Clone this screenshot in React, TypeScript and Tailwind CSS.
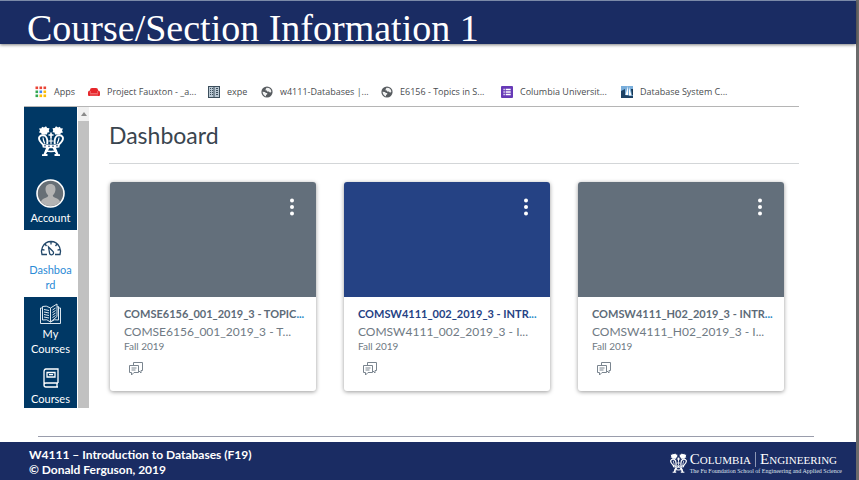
import React from "react";

function Crown({ className }: { className: string }) {
  return (
    <svg className={className} viewBox="0 0 26 30" fill="none" stroke="white" aria-hidden="true">
      <g fill="white" stroke="none">
        <path d="M4 .8L6 1.500 8 .3 9.200 2 11.500 2.300 10.800 4.500 11.500 6.300 9.500 6.500 9 8.500H3.500L3.300 7 1 6.500 2 4.500 1 2.500 3.500 2.300z" />
        <path d="M22 .8L20 1.500 18 .3 16.800 2 14.500 2.300 15.200 4.500 14.500 6.300 16.500 6.500 17 8.500H22.500L22.700 7 25 6.500 24 4.500 25 2.500 22.500 2.300z" />
        <path d="M12.200 6.500h1.600v1.800h1.700v1.500h-1.700V12h-1.600V9.800h-1.700V8.300h1.700z" />
        <path d="M4 17.800q9 2 18 0L21.300 21.500q-8.300 1.500-16.600 0z" />
        <path d="M8 22h3.500L8 28h1.500v2H4v-1.800h1.500zM18 22h-3.500L18 28h-1.500v2H22v-1.800h-1.500z" />
        <path d="M7 24q6 1.500 12 0v1.600q-6 1.500-12 0z" />
      </g>
      <path d="M5 18.500Q.2 14.500 1.200 11.200 2.800 8.500 6.500 9.500 10 11.500 9.200 18M21 18.500q4.800-4 3.800-7.300-1.600-2.700-5.300-1.700Q16 11.500 16.800 18" strokeWidth="1.900" />
      <path d="M5 11.500Q5.200 14.500 6.800 17.500M21 11.500Q20.800 14.500 19.200 17.500M13 12v6.500M10.500 15h5" strokeWidth="1.200" />
      <path d="M6 19.800h2M10 20.200h2M14 20.200h2M18 19.800h2" stroke="#17366b" strokeWidth=".9" />
    </svg>
  );
}

function AppsIcon() {
  const colors = ["#ea4335", "#ea4335", "#ea4335", "#34a853", "#4285f4", "#fbbc05", "#34a853", "#fbbc05", "#fbbc05"];
  return (
    <svg className="size-3 shrink-0" viewBox="0 0 12 12" aria-hidden="true">
      {colors.map((c, i) => (
        <rect key={i} x={0.5 + (i % 3) * 4} y={0.5 + Math.floor(i / 3) * 4} width="2.600" height="2.600" fill={c} />
      ))}
    </svg>
  );
}

function CouchIcon() {
  return (
    <svg className="size-3 shrink-0" viewBox="0 0 12 12" aria-hidden="true">
      <path d="M2 4q0-2 2-2h4q2 0 2 2v.6q2 0 2 1.800V9q0 1-1 1H1Q0 10 0 9V6.400q0-1.800 2-1.800z" fill="#e6262b" />
      <path d="M2.300 5v2.500h7.400V5M2 9h8" stroke="#f79a9c" strokeWidth=".6" fill="none" />
    </svg>
  );
}

function BuildingIcon() {
  return (
    <svg className="size-3 shrink-0" viewBox="0 0 12 12" aria-hidden="true">
      <rect x=".5" y=".5" width="11" height="11" fill="#b9c7d2" stroke="#3c4e5c" />
      <path d="M6 0v12" stroke="#3c4e5c" />
      <path d="M2 2.500h1M4 2.500h1M2 4.500h1M4 4.500h1M2 6.500h1M4 6.500h1M2 8.500h1M4 8.500h1M8 2.500h2M8 4.500h2M8 6.500h2M8 8.500h2" stroke="#3c4e5c" />
    </svg>
  );
}

function GlobeIcon() {
  return (
    <svg className="size-3 shrink-0" viewBox="0 0 12 12" aria-hidden="true">
      <circle cx="6" cy="6" r="5.600" fill="#585c60" />
      <path d="M1.500 5.800l2.300.2 1.200 1h1.200v1.300L5 9v1.400Q1.900 9.300 1.500 5.800zM5.500 1.700l2.500.3q2.200 1.200 2.400 3.600L9.200 6.800 7.800 5.600H6V4.400H4.600V3.200z" fill="#f1f2f2" />
    </svg>
  );
}

function ListIcon() {
  return (
    <svg className="size-3 shrink-0" viewBox="0 0 12 12" aria-hidden="true">
      <rect width="12" height="12" rx="1" fill="#673ab7" />
      <path d="M2.500 3.500h1.200M2.500 6h1.200M2.500 8.500h1.200M4.700 3.500h5M4.700 6h5M4.700 8.500h5" stroke="white" strokeWidth="1.300" />
    </svg>
  );
}

function SailIcon() {
  return (
    <svg className="size-3 shrink-0" viewBox="0 0 12 12" aria-hidden="true">
      <rect width="12" height="12" fill="#79aedb" />
      <path d="M0 5l4-2v6l8 1v2H0z" fill="#1e4265" />
      <path d="M7 0L4.500 9H7zM8 1v8.500h2.500z" fill="white" />
      <path d="M10 3h2v6l-1 .5z" fill="#163653" />
    </svg>
  );
}

const bookmarks = [
  { label: "Apps", icon: <AppsIcon />, width: "w-[53px]" },
  { label: "Project Fauxton - _a...", icon: <CouchIcon />, width: "w-[120px]" },
  { label: "expe", icon: <BuildingIcon />, width: "w-[53px]" },
  { label: "w4111-Databases |...", icon: <GlobeIcon />, width: "w-[120px]" },
  { label: "E6156 - Topics in S...", icon: <GlobeIcon />, width: "w-[120px]" },
  { label: "Columbia Universit...", icon: <ListIcon />, width: "w-[120px]" },
  { label: "Database System C...", icon: <SailIcon />, width: "w-[120px]" },
];

function Sidebar() {
  return (
    <nav aria-label="Global" className="flex w-[53px] shrink-0 flex-col bg-[#003865] text-center text-[11px] leading-[15px] text-white">
      <a href="#home" aria-label="Home" className="flex h-[70px] justify-center pt-[19px]">
        <Crown className="h-[30px] w-[26px]" />
      </a>
      <a href="#account" className="flex h-[53px] flex-col items-center gap-[2px]">
        <svg className="size-[31px] shrink-0" viewBox="0 0 31 31" aria-hidden="true">
          <circle cx="15.500" cy="16.500" r="13.500" fill="#676f76" stroke="white" strokeWidth="1.600" />
          <path d="M15.500 7c3.500 0 5 2.300 5 5.300 0 2.500-1.200 5-2.700 6 0 3 5.700 2.200 7.200 6.500a12.700 12.700 0 01-19 0c1.500-4.300 7.200-3.500 7.200-6.500-1.500-1-2.700-3.500-2.700-6 0-3 1.500-5.300 5-5.300z" fill="#b3b3b3" />
        </svg>
        <span>Account</span>
      </a>
      <a href="#dashboard" aria-current="page" className="flex h-[67px] flex-col items-center bg-white pt-2 text-[#2c8bd6]">
        <svg className="h-6 w-[22px] shrink-0" viewBox="0 0 22 24" fill="none" stroke="#23486a" strokeWidth="1.300" aria-hidden="true">
          <path d="M7 16.500H2Q.8 12.500 2.500 9 5.300 3.500 11 3.500t8.500 5.500Q21.200 12.500 20 16.500h-5M11 3.500v3M5 6l1.500 2M17 6l-1.500 2M2 11.500l2.500.6M20 11.500l-2.500.6" />
          <path d="M8.500 9l4.300 4.300a2 2 0 11-3.200 2z" />
        </svg>
        <span className="w-11 wrap-anywhere">Dashboard</span>
      </a>
      <a href="#my-courses" className="flex h-[63px] flex-col items-center pt-[5px]">
        <svg className="h-6 w-[21px] shrink-0" viewBox="0 0 21 24" fill="none" stroke="#dce6ee" strokeWidth="1" aria-hidden="true">
          <path d="M10.500 6Q6 3 2.500 4.500V18q4.500-1.500 8 2 4-3.500 8-2V4.500L17 5M10.500 6v14M10.500 6L17 2V14.500l-6.500 5.500M2.500 6h-2v15.500h20V6h-2" />
          <path d="M4 7.500l5 1M4 10l5 1M4 12.500l5 1M4 15l5 1M12.500 8l3-2M12.500 10.500l3-2M12.500 13l3-2M12.500 15.500l3-2" />
        </svg>
        <span>My Courses</span>
      </a>
      <a href="#courses" className="flex h-12 flex-col items-center gap-[3px] pt-2">
        <svg className="h-5 w-[18px] shrink-0" viewBox="0 0 18 20" fill="none" stroke="white" strokeWidth="1.300" aria-hidden="true">
          <path d="M16 15V1H4Q2 1 2 3.500V17Q2 19 4 19h12M16 15H4q-2 0-2 2M15 15v4M5 4.500h8v4.500H5zM7 6.700h4" />
        </svg>
        <span>Courses</span>
      </a>
    </nav>
  );
}

const courses = [
  { title: "COMSE6156_001_2019_3 - TOPIC", code: "COMSE6156_001_2019_3 - T...", banner: "bg-[#636f7b]", text: "text-[#5d6b78]", dots: "text-[#268bc8]" },
  { title: "COMSW4111_002_2019_3 - INTR", code: "COMSW4111_002_2019_3 - I...", banner: "bg-[#254284]", text: "text-[#254284]", dots: "text-[#268bc8]" },
  { title: "COMSW4111_H02_2019_3 - INTR", code: "COMSW4111_H02_2019_3 - I...", banner: "bg-[#636f7b]", text: "text-[#5d6b78]", dots: "text-[#268bc8]" },
];

function CourseCard({ course }: { course: (typeof courses)[number] }) {
  return (
    <article className="rounded-[3px] bg-white shadow-[0_1px_4px_rgba(0,0,0,0.4)]">
      <div className={`flex h-[115px] justify-end rounded-t-[3px] pt-[13px] pr-3 ${course.banner}`}>
        <button type="button" aria-label="Course options" className="flex h-6 w-6 items-center justify-center">
          <svg className="h-[18px] w-1" viewBox="0 0 4 18" fill="white" aria-hidden="true">
            <circle cx="2" cy="2.500" r="2" />
            <circle cx="2" cy="9" r="2" />
            <circle cx="2" cy="15.500" r="2" />
          </svg>
        </button>
      </div>
      <div className="flex h-[94px] flex-col items-start pt-2 pl-[14px] whitespace-nowrap text-[#6f7a84]">
        <h2 className={`text-[11px] leading-[18px] font-bold ${course.text}`}>
          {course.title}
          <span className={course.dots}>...</span>
        </h2>
        <p className="text-[12px] leading-[18px]">{course.code}</p>
        <p className="text-[10px] leading-[10px]">Fall 2019</p>
        <a href="#discussions" aria-label="Discussions" className="mt-[10px] ml-1">
          <svg className="h-4 w-4" viewBox="0 0 16 16" fill="none" stroke="#7a858f" strokeWidth="1" aria-hidden="true">
            <path d="M5.500 4.500v-3h9v8H13v2.500l-2.500-2.500" />
            <path d="M1.500 4.500h9v7H6L3.500 14v-2.500h-2zM3.500 7h5M3.500 9h4" />
          </svg>
        </a>
      </div>
    </article>
  );
}

export default function App() {
  return (
    <div className="flex min-h-screen flex-col border-r-[3px] border-[#6b6b6b] bg-white font-['Lato','Liberation_Sans',sans-serif]">
      <header className="flex h-11 items-end border-t border-[#7b8aa8] bg-[#1a2c63] pl-[27px] shadow-[0_1px_3px_rgba(0,0,0,0.5)]">
        <h1 className="font-['Century_Schoolbook','Liberation_Serif',serif] text-[38px] leading-8 whitespace-nowrap text-white">
          Course/Section Information 1
        </h1>
      </header>

      <section className="mt-[34px] mr-[57px] ml-6 flex flex-col">
        <div className="flex h-[29px] items-center border-b border-[#b5b5b5] pl-[11px] font-['Open_Sans','Noto_Sans',sans-serif] text-[9px] text-[#4a4d50]">
          {bookmarks.map((b) => (
            <a key={b.label} href="#bookmark" className={`flex shrink-0 items-center gap-[7px] whitespace-nowrap ${b.width}`}>
              {b.icon}
              {b.label}
            </a>
          ))}
        </div>
        <div className="flex">
          <Sidebar />
          <div className="ml-px flex w-[11px] shrink-0 flex-col bg-[#c1c1c1]" aria-hidden="true">
            <div className="flex h-[14px] items-center justify-center bg-[#f0f0f0]">
              <svg className="h-1 w-[6px]" viewBox="0 0 6 4" fill="#8a8a8a">
                <path d="M0 4l3-4 3 4z" />
              </svg>
            </div>
          </div>
          <main className="ml-5 flex-1">
            <h2 className="flex h-[57px] items-center border-b border-[#d3d6d8] text-[23px] leading-8 text-[#3a454f]">Dashboard</h2>
            <div className="mt-[18px] mr-[15px] ml-px grid grid-cols-3 gap-7">
              {courses.map((c) => (
                <CourseCard key={c.title} course={c} />
              ))}
            </div>
          </main>
        </div>
      </section>

      <div className="mt-auto mr-[42px] ml-[38px] border-t border-[#9a9dac]" />
      <footer className="mt-[5px] flex h-[38px] items-center justify-between bg-[#1a2c63] pr-[14px] pl-[29px] text-white">
        <p className="pt-[2px] text-[12px] leading-[15px] font-bold">
          W4111 – Introduction to Databases (F19)
          <br />
          © Donald Ferguson, 2019
        </p>
        <div className="flex items-center gap-[3px] pt-1 font-['Liberation_Serif',serif] whitespace-nowrap">
          <Crown className="h-5 w-[17px]" />
          <div className="flex flex-col">
            <p className="flex gap-1 text-[15px] leading-[14px]">
              <span className="border-r border-[#8d97b5] pr-1">C<span className="text-[11px]">OLUMBIA</span></span>
              <span>E<span className="text-[11px]">NGINEERING</span></span>
            </p>
            <p className="text-[6px] leading-[8px] text-[#dfe3ee]">The Fu Foundation School of Engineering and Applied Science</p>
          </div>
        </div>
      </footer>
    </div>
  );
}
